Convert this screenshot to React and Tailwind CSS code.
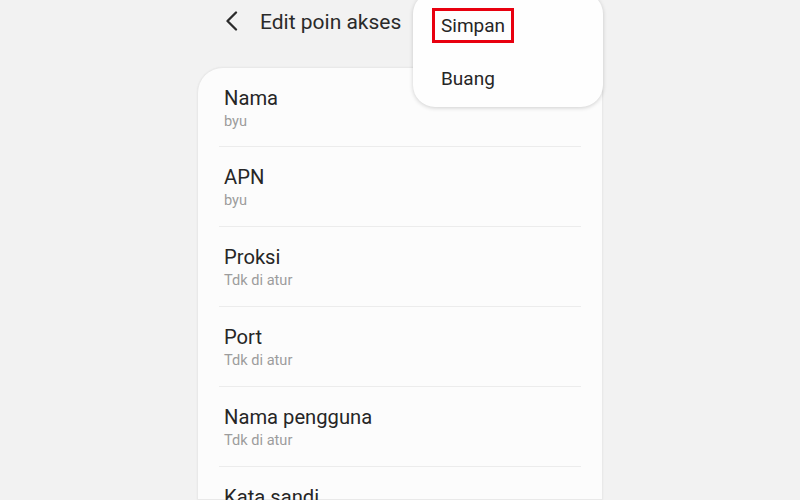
import React from "react";

const rows = [
  ["Nama", "byu"],
  ["APN", "byu"],
  ["Proksi", "Tdk di atur"],
  ["Port", "Tdk di atur"],
  ["Nama pengguna", "Tdk di atur"],
  ["Kata sandi", "Tdk di atur"],
];

export default function App() {
  return (
    <div
      className="relative w-[800px] h-[500px] overflow-hidden bg-[#f2f2f2] flex justify-center"
      style={{ fontFamily: "Roboto, 'Liberation Sans', sans-serif" }}
    >
      <div className="w-[406px] flex flex-col">
        <div className="h-[67px] shrink-0 flex items-start pt-[8px] pl-[28px]">
          <svg width="14" height="20" viewBox="0 0 14 20" className="mt-[3px] shrink-0">
            <path d="M11 1.5 L2.5 10 L11 18.5" fill="none" stroke="#2b2b2b" strokeWidth="2.3" strokeLinecap="round" strokeLinejoin="round" />
          </svg>
          <span className="ml-[21px] text-[21px] leading-[28px] text-[#2a2a2a]">Edit poin akses</span>
        </div>
        <div className="bg-[#fcfcfc] rounded-t-[26px] border border-[#e9e9e9] shadow-[0_0_2px_rgba(0,0,0,0.05)] px-[21px] flex-1 min-h-0">
          {rows.map(([t, s], i) => (
            <div
              key={i}
              className={
                "pl-[5px] pt-[18px] " +
                (i === 0 ? "pb-[15px] " : "pb-[16px] ") +
                (i < rows.length - 1 ? "border-b border-[#ececec]" : "")
              }
            >
              <div className="text-[20.2px] leading-[24px] text-[#262626]">{t}</div>
              <div className="mt-[1px] text-[14.6px] leading-[20px] text-[#9c9c9c]">{s}</div>
            </div>
          ))}
        </div>
      </div>

      <div className="absolute left-[413px] top-[-8px] w-[190px] h-[115px] bg-[#fefefe] rounded-[22px] shadow-[0_1px_4px_rgba(0,0,0,0.18)] pl-[19px]">
        <div className="mt-[16px] inline-block border-[3px] border-[#e8000f] px-[6px] h-[35px] text-[19px] leading-[29px] text-[#262626]">
          Simpan
        </div>
        <div className="mt-[22px] pl-[9px] text-[19px] leading-[28px] text-[#262626]">Buang</div>
      </div>
    </div>
  );
}
